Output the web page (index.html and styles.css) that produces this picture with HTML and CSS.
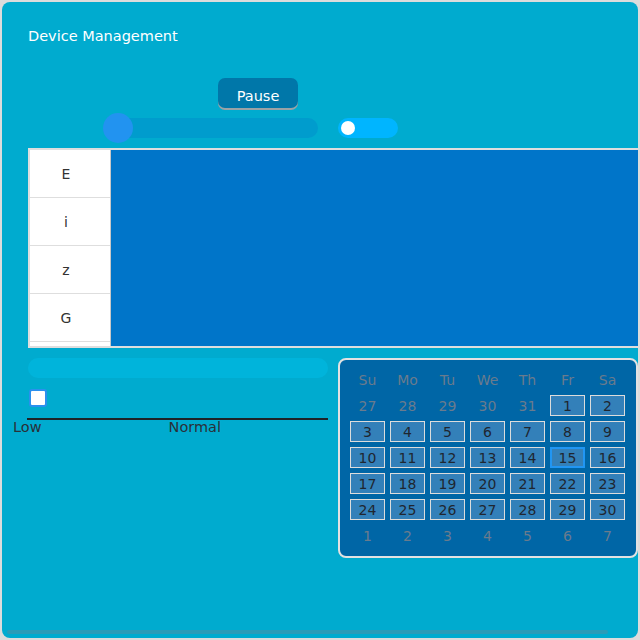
FILE: index.html
```html
<!DOCTYPE html>
<html>
<head>
<meta charset="utf-8">
<link rel="stylesheet" href="styles.css">
</head>
<body>
<div class="screen">
  <div class="title">Device Management</div>
  <div class="btn-row"><button class="btn">Pause</button></div>
  <div class="ctrl-row">
    <div class="slider"><div class="knob"></div></div>
    <div class="switch"><div class="switch-knob"></div></div>
  </div>
  <div class="list">
    <div class="list-col">
      <div class="list-item">E</div>
      <div class="list-item">i</div>
      <div class="list-item">z</div>
      <div class="list-item">G</div>
      <div class="list-item"></div>
    </div>
    <div class="list-body"></div>
  </div>
  <div class="bottom">
    <div class="left">
      <div class="bar"></div>
      <div class="check"></div>
      <div class="scale-line"></div>
      <div class="scale-labels"><span class="lbl-low">Low</span><span class="lbl-normal">Normal</span></div>
    </div>
    <div class="calendar">
      <div class="cal-grid">
        <div class="hd">Su</div><div class="hd">Mo</div><div class="hd">Tu</div><div class="hd">We</div><div class="hd">Th</div><div class="hd">Fr</div><div class="hd">Sa</div>
        <div class="dim">27</div><div class="dim">28</div><div class="dim">29</div><div class="dim">30</div><div class="dim">31</div><div class="day">1</div><div class="day">2</div>
        <div class="day">3</div><div class="day">4</div><div class="day">5</div><div class="day">6</div><div class="day">7</div><div class="day">8</div><div class="day">9</div>
        <div class="day">10</div><div class="day">11</div><div class="day">12</div><div class="day">13</div><div class="day">14</div><div class="day today">15</div><div class="day">16</div>
        <div class="day">17</div><div class="day">18</div><div class="day">19</div><div class="day">20</div><div class="day">21</div><div class="day">22</div><div class="day">23</div>
        <div class="day">24</div><div class="day">25</div><div class="day">26</div><div class="day">27</div><div class="day">28</div><div class="day">29</div><div class="day">30</div>
        <div class="dim">1</div><div class="dim">2</div><div class="dim">3</div><div class="dim">4</div><div class="dim">5</div><div class="dim">6</div><div class="dim">7</div>
      </div>
    </div>
  </div>
  <div class="hscroll"></div>
</div>
</body>
</html>
```
FILE: styles.css
```css
html, body {
  margin: 0;
  padding: 0;
  background: #dcdcdc;
}
body {
  width: 640px;
  height: 640px;
  font-family: "DejaVu Sans", sans-serif;
  font-size: 14px;
}
.screen {
  position: relative;
  margin: 2px;
  width: 636px;
  height: 636px;
  box-sizing: border-box;
  background: #00abcf;
  border-radius: 8px;
  overflow: hidden;
  padding: 26px 0 0 26px;
  display: flex;
  flex-direction: column;
}
.title {
  color: #ffffff;
  line-height: 16px;
  height: 16px;
  font-size: 14.5px;
}
.btn-row {
  margin-top: 34px;
  padding-left: 190px;
  height: 32px;
}
.btn {
  width: 80px;
  height: 30px;
  box-sizing: border-box;
  border: none;
  border-radius: 7px;
  background: #0077a9;
  color: #fff;
  font-family: "DejaVu Sans", sans-serif;
  font-size: 14.5px;
  padding: 6px 0 0 0;
  box-shadow: 0 2px 0 #9aa2a6;
  line-height: 24px;
}
.ctrl-row {
  margin-top: 8px;
  display: flex;
  gap: 20px;
  padding-left: 75px;
  height: 20px;
}
.slider {
  width: 215px;
  height: 20px;
  border-radius: 10px;
  background: #009ccd;
  position: relative;
}
.knob {
  position: absolute;
  left: 0;
  top: -5px;
  width: 30px;
  height: 30px;
  border-radius: 50%;
  background: #2293f0;
}
.switch {
  width: 60px;
  height: 20px;
  border-radius: 10px;
  background: #00b5ff;
  display: flex;
  align-items: center;
  padding-left: 3px;
  box-sizing: border-box;
}
.switch-knob {
  width: 14px;
  height: 14px;
  border-radius: 50%;
  background: #fff;
}
.list {
  margin-top: 10px;
  width: 630px;
  height: 200px;
  flex: none;
  box-sizing: border-box;
  border: 2px solid #dedede;
  border-right: none;
  display: flex;
  overflow: hidden;
}
.list-col {
  width: 81px;
  background: #fff;
  flex: none;
  border-right: 1px solid #c8c8c8;
  box-sizing: border-box;
}
.list-item {
  height: 47px;
  border-bottom: 1px solid #dedede;
  display: flex;
  align-items: center;
  justify-content: center;
  color: #333;
  padding-right: 8px;
}
.list-body {
  flex: 1;
  background: #0075c9;
}
.bottom {
  margin-top: 10px;
  display: flex;
  gap: 10px;
}
.left {
  width: 300px;
  display: flex;
  flex-direction: column;
}
.bar {
  height: 20px;
  border-radius: 10px;
  background: #00b4db;
}
.check {
  margin-top: 11px;
  margin-left: 1px;
  width: 14px;
  height: 14px;
  border: 2px solid #2a90ee;
  border-radius: 3px;
  background: #fff;
}
.scale-line {
  margin-top: 11px;
  margin-left: -1px;
  height: 2px;
  background: #1e2328;
}
.scale-labels {
  margin-left: -15px;
  height: 16px;
  line-height: 14px;
  color: #2a3038;
  display: flex;
  font-size: 14.5px;
}
.lbl-normal {
  margin-left: 127px;
}
.calendar {
  width: 300px;
  height: 200px;
  box-sizing: border-box;
  border: 2px solid #e2e2e2;
  border-radius: 8px;
  background: #0066a6;
  padding: 9px 0 0 10px;
}
.cal-grid {
  display: grid;
  grid-template-columns: repeat(7, 35px);
  grid-auto-rows: 21px;
  column-gap: 5px;
  row-gap: 5px;
}
.cal-grid > div {
  display: flex;
  align-items: center;
  justify-content: center;
  box-sizing: border-box;
  font-size: 14px;
}
.hd, .dim {
  color: #6a7b8d;
}
.day {
  border: 1px solid #dcdcdc;
  background: #3380b9;
  color: #1f2630;
}
.day.today {
  border: 2px solid #2196f3;
}
.hscroll {
  position: absolute;
  left: 5px;
  bottom: 4px;
  width: 601px;
  height: 4px;
  border-radius: 2px;
  background: rgba(120, 130, 140, 0.35);
}
```
